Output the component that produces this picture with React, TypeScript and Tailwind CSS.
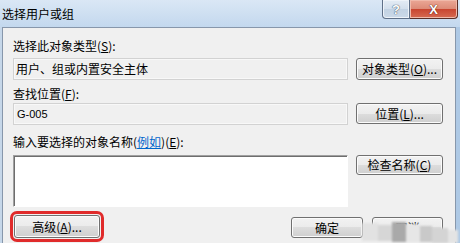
import type { ReactNode } from 'react'

const FONT = { fontFamily: '"Noto Sans CJK SC", "Noto Sans", sans-serif' }

function Key({ k }: { k: string }) {
  return (
    <span className="tracking-[0px]">
      (<span className="underline underline-offset-1">{k}</span>)
    </span>
  )
}

function Btn({ children, className = '' }: { children: ReactNode; className?: string }) {
  return (
    <div
      className={`flex items-center justify-center rounded-[3px] border border-[#707070] bg-[linear-gradient(#f2f2f2,#ebebeb_50%,#dddddd_50%,#cfcfcf)] text-[12px] leading-none text-black shadow-[inset_0_0_0_1px_#fbfbfb] ${className}`}
    >
      {children}
    </div>
  )
}

function Label({ children }: { children: ReactNode }) {
  return <div className="h-[16px] text-[12px] leading-[16px] text-black">{children}</div>
}

function TitleButtons() {
  return (
    <div className="ml-auto mr-[2px] flex h-[19px] self-start">
      <div className="flex w-[28px] items-center justify-center rounded-bl-[4px] border border-t-0 border-[#5f7088] bg-[linear-gradient(#e4ecf5,#d3dfec_50%,#c2d2e3_50%,#cbd9e8)] shadow-[inset_0_0_0_1px_#eef3f9]">
        <span
          className="text-[13px] font-bold leading-none text-white"
          style={{ fontFamily: '"Liberation Sans", sans-serif', textShadow: '0 0 1px #3b4b60, 0 0 1px #3b4b60' }}
        >
          ?
        </span>
      </div>
      <div className="flex w-[48px] items-center justify-center rounded-br-[4px] border border-l-0 border-t-0 border-[#5a2e27] bg-[linear-gradient(#eba796,#dc8a77_50%,#c8442f_50%,#d66b52)] shadow-[inset_0_0_0_1px_#f0b9aa]">
        <span
          className="text-[13px] font-bold leading-none text-white"
          style={{ fontFamily: '"Liberation Sans", sans-serif', textShadow: '0 0 1px #5a1d14, 0 0 1px #5a1d14' }}
        >
          X
        </span>
      </div>
    </div>
  )
}

function Mosaic() {
  const blocks = [
    { l: 0, t: 3, w: 16, h: 18, c: '#e2e2e2' },
    { l: 16, t: 5, w: 14, h: 16, c: '#d6d6d6' },
    { l: 30, t: 2, w: 14, h: 20, c: '#a9a9a9' },
    { l: 44, t: 4, w: 14, h: 18, c: '#e6e6e6' },
    { l: 58, t: 6, w: 12, h: 16, c: '#c9c9c9' },
    { l: 70, t: 8, w: 16, h: 15, c: '#d4d4d4' },
    { l: 86, t: 10, w: 10, h: 13, c: '#e4e4e4' },
  ]
  return (
    <div className="pointer-events-none absolute left-[362px] top-[220px] h-[23px] w-[98px] blur-[1px]">
      {blocks.map((b, i) => (
        <div
          key={i}
          className="absolute"
          style={{ left: b.l, top: b.t, width: b.w, height: b.h, background: b.c }}
        />
      ))}
    </div>
  )
}

export default function App() {
  return (
    <div className="relative flex h-[243px] w-[460px] flex-col overflow-hidden bg-[#b9d1ea]" style={FONT}>
      {/* title bar */}
      <div className="flex h-[27px] shrink-0 items-center bg-[linear-gradient(#dae7f5,#c3d8ee)] pl-[2px]">
        <span className="text-[12px] leading-none text-black">选择用户或组</span>
        <TitleButtons />
      </div>

      {/* window body */}
      <div className="flex min-h-0 flex-1">
        <div className="w-[2px] bg-[#c6d7e9]" />
        <div className="flex flex-1 flex-col border-l border-r border-t border-[#8797ab] bg-[#f0f0f0] pl-[10px] pt-[10px]">
          <Label>
            选择此对象类型<Key k="S" />:
          </Label>
          <div className="mt-[4px] flex gap-[8px]">
            <div className="flex h-[22px] w-[335px] items-center border border-[#d2d2d2] bg-[#f0f0f0] pl-[2px] text-[12px] text-black shadow-[inset_0_0_0_1px_#f8f8f8]">
              用户、组或内置安全主体
            </div>
            <Btn className="h-[22px] w-[87px]">
              对象类型<Key k="O" />...
            </Btn>
          </div>

          <div className="mt-[6px]">
            <Label>
              查找位置<Key k="F" />:
            </Label>
          </div>
          <div className="mt-[1px] flex gap-[8px]">
            <div
              className="flex h-[22px] w-[335px] items-center border border-[#d2d2d2] bg-[#f0f0f0] pl-[3px] text-[11px] text-black shadow-[inset_0_0_0_1px_#f8f8f8]"
              style={{ fontFamily: '"Liberation Sans", sans-serif' }}
            >
              G-005
            </div>
            <Btn className="h-[21px] w-[87px]">
              位置<Key k="L" />...
            </Btn>
          </div>

          <div className="mt-[9px]">
            <Label>
              输入要选择的对象名称(<span className="text-[#0066cc] underline">例如</span>)<Key k="E" />:
            </Label>
          </div>
          <div className="mt-[5px] flex gap-[8px]">
            <div className="h-[52px] w-[335px] border border-b-white border-l-[#a0a0a0] border-r-white border-t-[#a0a0a0] bg-white shadow-[inset_1px_1px_0_#6e6e6e]" />
            <Btn className="h-[20px] w-[87px]">
              检查名称<Key k="C" />
            </Btn>
          </div>

          <div className="mt-[8px] flex items-end">
            <Btn className="ml-[1px] h-[23px] w-[86px] outline-[3px] outline-offset-[1px] outline-[#e02b2b] outline-solid">
              高级<Key k="A" />...
            </Btn>
            <Btn className="ml-[191px] h-[21px] w-[72px]">确定</Btn>
            <Btn className="ml-[9px] h-[21px] w-[71px]">取消</Btn>
          </div>
        </div>
        <div className="w-[4px] bg-[#aec9e5]" />
      </div>

      <Mosaic />
    </div>
  )
}
